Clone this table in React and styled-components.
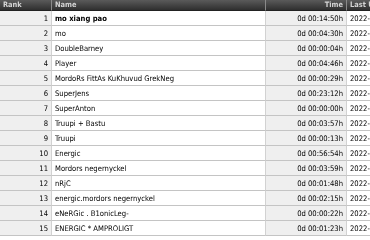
import styled, { createGlobalStyle } from 'styled-components';

const GlobalStyle = createGlobalStyle`
  html, body {
    margin: 0;
    padding: 0;
    background: #ffffff;
    overflow: hidden;
  }
`

const Table = styled.table`
  border-collapse: separate;
  border-spacing: 0;
  table-layout: fixed;
  width: 460px;
  will-change: transform;
  -webkit-font-smoothing: antialiased;
  font-family: "DejaVu Sans", Verdana, sans-serif;
  font-stretch: condensed;
`

const Head = styled.th`
  height: 10px;
  padding: 0 3px;
  background: linear-gradient(#5a5a5a, #2f2f2f);
  border-right: 1px solid #8a8a8a;
  border-bottom: 1px solid #222;
  color: #d4d4d4;
  font-family: "DejaVu Sans", Verdana, sans-serif;
  font-stretch: condensed;
  font-weight: bold;
  font-size: 7.4px;
  line-height: 10px;
  text-align: ${p => p.$align || 'left'};
  white-space: nowrap;
  overflow: hidden;
`

const Cell = styled.td`
  height: 14px;
  padding: 0 3px;
  background: ${p => p.$shade ? '#efefef' : '#ffffff'};
  border-right: 1px solid #d2d2d2;
  border-bottom: 1px solid #c4c4c4;
  color: #000000;
  font-family: "DejaVu Sans", Verdana, sans-serif;
  font-stretch: condensed;
  font-size: 7.6px;
  text-align: ${p => p.$align || 'left'};
  font-weight: ${p => p.$bold ? 'bold' : 'normal'};
  white-space: nowrap;
  overflow: hidden;
`

const rows = [
  ['mo xiang pao', '0d 00:14:50h'],
  ['mo', '0d 00:04:30h'],
  ['DoubleBarney', '0d 00:00:04h'],
  ['Player', '0d 00:04:46h'],
  ['MordoRs FittAs KuKhuvud GrekNeg', '0d 00:00:29h'],
  ['SuperJens', '0d 00:23:12h'],
  ['SuperAnton', '0d 00:00:00h'],
  ['Truupi + Bastu', '0d 00:03:57h'],
  ['Truupi', '0d 00:00:13h'],
  ['Energic', '0d 00:56:54h'],
  ['Mordors negernyckel', '0d 00:03:59h'],
  ['nRjC', '0d 00:01:48h'],
  ['energic.mordors negernyckel', '0d 00:02:15h'],
  ['eNeRGic . B1onicLeg-', '0d 00:00:22h'],
  ['ENERGIC * AMPROLIGT', '0d 00:01:23h'],
]

export default function App() {
  return (
    <>
      <GlobalStyle />
      <Table>
        <colgroup>
          <col style={{ width: 52 }} />
          <col style={{ width: 214 }} />
          <col style={{ width: 81 }} />
          <col />
        </colgroup>
        <thead>
          <tr>
            <Head>Rank</Head>
            <Head>Name</Head>
            <Head $align="right">Time</Head>
            <Head>Last Updated</Head>
          </tr>
        </thead>
        <tbody>
          {rows.map(([name, time], i) => (
            <tr key={i}>
              <Cell $shade $align="right">{i + 1}</Cell>
              <Cell $bold={i === 0}>{name}</Cell>
              <Cell $shade $align="right">{time}</Cell>
              <Cell>2022-03-14 21:07:33</Cell>
            </tr>
          ))}
        </tbody>
      </Table>
    </>
  )
}
